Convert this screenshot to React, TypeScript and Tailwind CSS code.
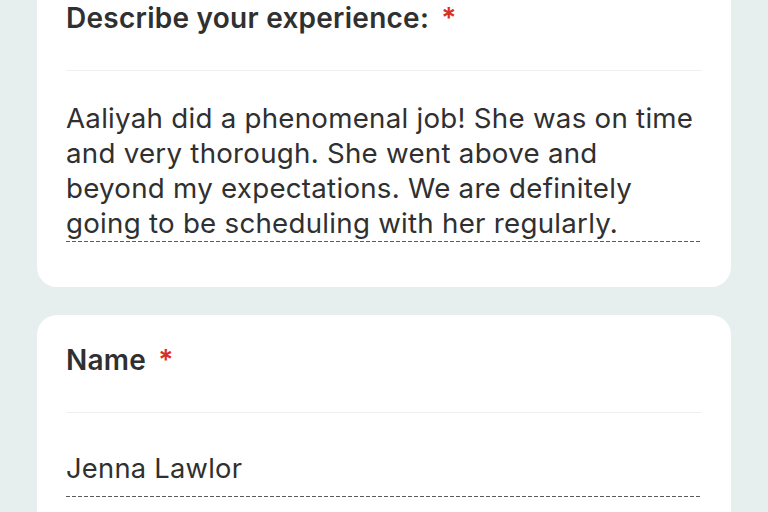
import React from "react";

const Required = () => <span className="ml-3 text-[#d93025]">*</span>;

const Dashed = () => (
  <div className="h-px bg-[repeating-linear-gradient(to_right,#5a5a5a_0_4px,transparent_4px_6px)]" />
);

const App = () => {
  return (
    <div
      className="min-h-[512px] overflow-hidden bg-[#e6efee] px-[37px] tracking-[0.016em] text-[#303030]"
      style={{ fontFamily: "Inter, 'Noto Sans', sans-serif" }}
    >
      {/* Experience card */}
      <div className="-mt-[30px] rounded-[20px] bg-white px-[29px] pt-[32px] pb-[45px]">
        <div className="text-[28px] font-semibold leading-[32px]">
          Describe your experience:
          <Required />
        </div>
        <div className="mt-[36px] h-px bg-[#f0f0f0]" />
        <p className="mt-[30px] text-[27.7px] leading-[35px]">
          Aaliyah did a phenomenal job! She was on time
          <br />
          and very thorough. She went above and
          <br />
          beyond my expectations. We are definitely
          <br />
          going to be scheduling with her regularly.
        </p>
        <Dashed />
      </div>

      {/* Name card */}
      <div className="mt-[28px] rounded-[20px] bg-white px-[29px] pt-[29px] pb-[40px]">
        <div className="text-[28px] font-semibold leading-[32px]">
          Name
          <Required />
        </div>
        <div className="mt-[36px] h-px bg-[#f0f0f0]" />
        <div className="mt-[38px] pb-[10px] text-[27.3px] leading-[35px]">Jenna Lawlor</div>
        <Dashed />
      </div>
    </div>
  );
};

export default App;
